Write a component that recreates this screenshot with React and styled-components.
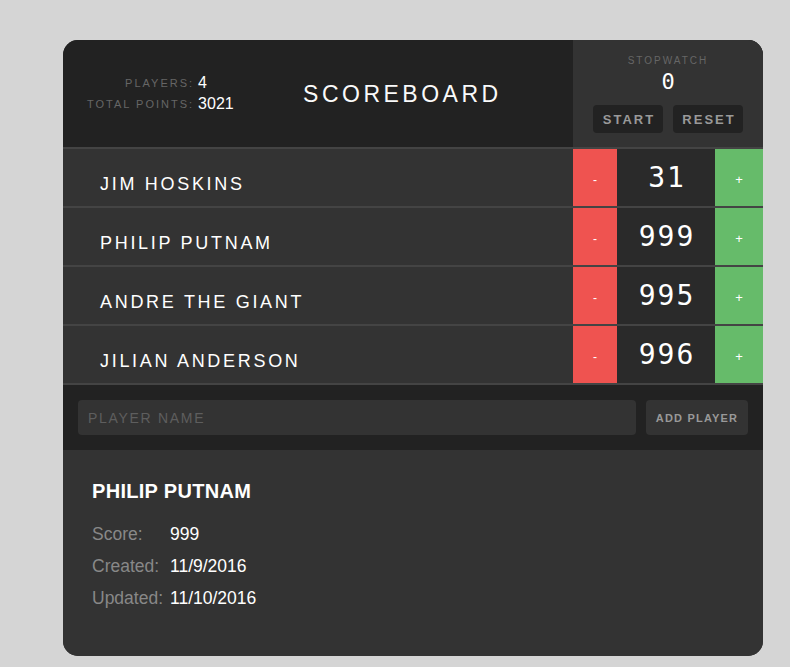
import React from "react";
import styled, { createGlobalStyle } from "styled-components";

const Global = createGlobalStyle`
  html, body { margin: 0; padding: 0; background: #d5d5d5; }
  body { font-family: "Liberation Sans", Arial, sans-serif; }
  * { box-sizing: border-box; }
`;

const Page = styled.div`
  padding: 40px 0 11px 63px;
`;

const Board = styled.div`
  width: 700px;
  border-radius: 15px;
  overflow: hidden;
  background: #333;
`;

const Header = styled.div`
  display: flex;
  height: 109px;
  background: #222;
  border-bottom: 2px solid #444;
`;

const Stats = styled.table`
  margin: 0 0 0 24px;
  border-collapse: collapse;
  align-self: center;
  td { padding: 0; height: 21px; }
`;

const StatLabel = styled.td`
  text-align: right;
  color: #666;
  font-size: 11px;
  letter-spacing: 2px;
  text-transform: uppercase;
  padding-right: 4px !important;
`;

const StatValue = styled.td`
  color: #fff;
  font-size: 16px;
`;

const Title = styled.h1`
  flex: 1;
  margin: 0;
  align-self: center;
  text-align: center;
  color: #fafafa;
  font-size: 23px;
  font-weight: normal;
  letter-spacing: 3.5px;
  padding-right: 2px;
  padding-top: 1px;
`;

const Stopwatch = styled.div`
  width: 190px;
  background: #333;
  display: flex;
  flex-direction: column;
  align-items: center;
  padding-top: 15px;
`;

const SwLabel = styled.div`
  color: #666;
  font-size: 10px;
  letter-spacing: 2px;
`;

const SwTime = styled.div`
  color: #fff;
  font-family: "DejaVu Sans Mono", monospace;
  font-size: 22px;
  line-height: 26px;
  margin-top: 3px;
`;

const SwButtons = styled.div`
  display: flex;
  gap: 10px;
  margin-top: 10px;
`;

const SwButton = styled.button`
  width: 70px;
  height: 28px;
  border: none;
  border-radius: 4px;
  background: #222;
  color: #999;
  font-family: "Liberation Sans", Arial, sans-serif;
  font-weight: bold;
  font-size: 13px;
  letter-spacing: 2px;
  padding: 0 0 0 2px;
`;

const Row = styled.div`
  display: flex;
  height: 59px;
  border-bottom: 2px solid #444;
`;

const Name = styled.div`
  flex: 1;
  display: flex;
  align-items: center;
  padding: 13px 0 0 37px;
  color: #fff;
  font-size: 18px;
  letter-spacing: 2.7px;
  background: #333;
`;

const Counter = styled.div`
  display: flex;
  width: 190px;
`;

const CountBtn = styled.button`
  width: ${p => (p.$plus ? 48 : 44)}px;
  border: none;
  color: #fff;
  font-size: ${p => (p.$plus ? 13 : 12)}px;
  font-family: "Liberation Sans", Arial, sans-serif;
  background: ${p => (p.$plus ? "#66bb6a" : "#ef5350")};
  padding: 4px 0 0 0;
`;

const Score = styled.div`
  flex: 1;
  display: flex;
  align-items: center;
  justify-content: center;
  background: #2a2a2a;
  color: #fff;
  font-family: "DejaVu Sans Mono", monospace;
  font-size: 28px;
  letter-spacing: 2px;
  padding: 0 0 0 2px;
`;

const Form = styled.form`
  display: flex;
  gap: 10px;
  background: #222;
  padding: 15px 15px 15px 15px;
  height: 65px;
`;

const Input = styled.input`
  flex: 1;
  height: 35px;
  border: none;
  border-radius: 4px;
  background: #333;
  padding: 0 10px;
  font-family: "Liberation Sans", Arial, sans-serif;
  font-size: 14px;
  letter-spacing: 1.7px;
  color: #fff;
  &::placeholder { color: #5e5e5e; }
`;

const AddBtn = styled.button`
  width: 102px;
  height: 35px;
  border: none;
  border-radius: 4px;
  background: #333;
  color: #999;
  font-family: "Liberation Sans", Arial, sans-serif;
  font-weight: bold;
  font-size: 11px;
  letter-spacing: 1.2px;
  padding: 0;
`;

const Details = styled.div`
  background: #333;
  padding: 30px 29px 36px 29px;
  min-height: 206px;
`;

const DetailTitle = styled.h3`
  margin: 0 0 15px 0;
  color: #fff;
  font-size: 20px;
  font-weight: bold;
  letter-spacing: 0.3px;
`;

const DetailRow = styled.div`
  display: flex;
  height: 32px;
  align-items: center;
  font-size: 17.5px;
`;

const DLabel = styled.span`
  color: #888;
  width: 78px;
`;

const DValue = styled.span`
  color: #fff;
`;

const players = [
  { name: "Jim Hoskins", score: 31 },
  { name: "Philip Putnam", score: 999 },
  { name: "Andre the Giant", score: 995 },
  { name: "Jilian Anderson", score: 996 },
];

export default function App() {
  const total = 3021;
  return (
    <Page>
      <Global />
      <Board>
        <Header>
          <Stats>
            <tbody>
              <tr>
                <StatLabel>Players:</StatLabel>
                <StatValue>{players.length}</StatValue>
              </tr>
              <tr>
                <StatLabel>Total Points:</StatLabel>
                <StatValue>{total}</StatValue>
              </tr>
            </tbody>
          </Stats>
          <Title>SCOREBOARD</Title>
          <Stopwatch>
            <SwLabel>STOPWATCH</SwLabel>
            <SwTime>0</SwTime>
            <SwButtons>
              <SwButton>START</SwButton>
              <SwButton>RESET</SwButton>
            </SwButtons>
          </Stopwatch>
        </Header>
        {players.map(p => (
          <Row key={p.name}>
            <Name>{p.name.toUpperCase()}</Name>
            <Counter>
              <CountBtn>-</CountBtn>
              <Score>{p.score}</Score>
              <CountBtn $plus>+</CountBtn>
            </Counter>
          </Row>
        ))}
        <Form onSubmit={e => e.preventDefault()}>
          <Input placeholder="PLAYER NAME" />
          <AddBtn type="submit">ADD PLAYER</AddBtn>
        </Form>
        <Details>
          <DetailTitle>PHILIP PUTNAM</DetailTitle>
          <DetailRow>
            <DLabel>Score:</DLabel>
            <DValue>999</DValue>
          </DetailRow>
          <DetailRow>
            <DLabel>Created:</DLabel>
            <DValue>11/9/2016</DValue>
          </DetailRow>
          <DetailRow>
            <DLabel>Updated:</DLabel>
            <DValue>11/10/2016</DValue>
          </DetailRow>
        </Details>
      </Board>
    </Page>
  );
}
